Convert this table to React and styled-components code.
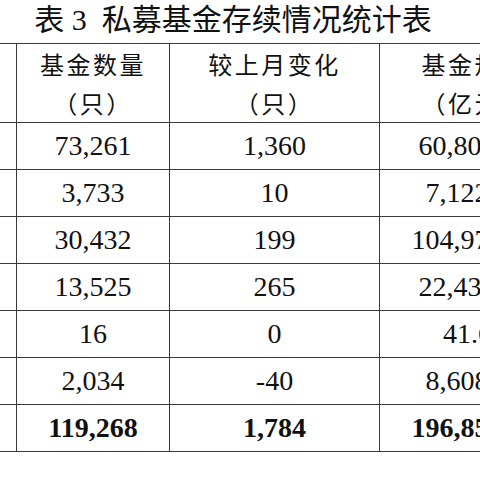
import React from "react";
import styled, { createGlobalStyle } from "styled-components";

const Global = createGlobalStyle`
  html, body { margin: 0; padding: 0; background: #ffffff; }
  body { font-family: "Liberation Serif", "Noto Sans CJK SC", serif; color: #111; }
`;

const Page = styled.div`
  width: 480px;
  height: 480px;
  overflow: hidden;
  background: #fff;
`;

const Sheet = styled.div`
  width: 672px;
  margin-left: -103px;
`;

const Title = styled.h1`
  margin: 0;
  height: 43px;
  padding-top: 1px;
  box-sizing: border-box;
  text-align: center;
  font-family: "Liberation Serif", "Noto Sans CJK SC", serif;
  font-weight: 400;
  font-size: 30px;
  line-height: 37px;
  color: #111;
  white-space: pre;
`;

const Table = styled.table`
  width: 672px;
  border-collapse: collapse;
  table-layout: fixed;
`;

const HeadCell = styled.th`
  height: 78px;
  padding: 0;
  border: 1px solid #3a3a3a;
  text-align: center;
  vertical-align: middle;
  font-family: "Noto Sans CJK SC", sans-serif;
  font-weight: 400;
  font-size: 24px;
  line-height: 39px;
  letter-spacing: 2.5px;
  color: #111;
  white-space: nowrap;
  overflow: hidden;
`;

const Cell = styled.td`
  height: 46px;
  padding: 0;
  border: 1px solid #3a3a3a;
  text-align: center;
  vertical-align: middle;
  font-family: "Liberation Serif", serif;
  font-size: 28px;
  font-weight: ${(p) => (p.$bold ? 700 : 400)};
  line-height: 46px;
  color: #111;
  white-space: nowrap;
  overflow: hidden;
`;

const columns = [
  { width: 119, lines: ["", ""] },
  { width: 153, lines: ["基金数量", "（只）"] },
  { width: 210, lines: ["较上月变化", "（只）"] },
  { width: 190, lines: ["基金规模", "（亿元）"] },
];

const rows = [
  ["", "73,261", "1,360", "60,801.12"],
  ["", "3,733", "10", "7,122.36"],
  ["", "30,432", "199", "104,973.45"],
  ["", "13,525", "265", "22,430.81"],
  ["", "16", "0", "41.60"],
  ["", "2,034", "-40", "8,608.47"],
  ["", "119,268", "1,784", "196,855.45"],
];

export default function App() {
  return (
    <Page>
      <Global />
      <Sheet>
        <Title>{"表 3  私募基金存续情况统计表"}</Title>
        <Table>
          <colgroup>
            {columns.map((c, i) => (
              <col key={i} style={{ width: c.width }} />
            ))}
          </colgroup>
          <thead>
            <tr>
              {columns.map((c, i) => (
                <HeadCell key={i}>
                  {c.lines[0]}
                  <br />
                  {c.lines[1]}
                </HeadCell>
              ))}
            </tr>
          </thead>
          <tbody>
            {rows.map((r, ri) => (
              <tr key={ri}>
                {r.map((v, ci) => (
                  <Cell key={ci} $bold={ri === rows.length - 1}>
                    {v}
                  </Cell>
                ))}
              </tr>
            ))}
          </tbody>
        </Table>
      </Sheet>
    </Page>
  );
}
